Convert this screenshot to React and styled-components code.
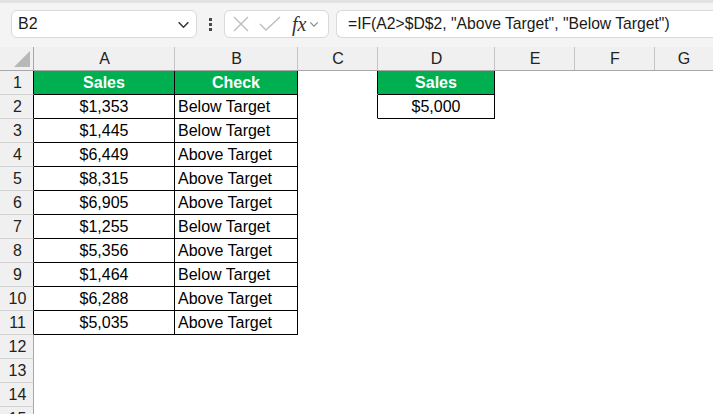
import React from "react"
import styled, { createGlobalStyle } from "styled-components"

const Global = createGlobalStyle`
  html, body { margin: 0; padding: 0; background: #fff; }
  body { width: 713px; height: 414px; overflow: hidden; font-family: "Liberation Sans", Arial, sans-serif; }
`

const rows = [
  ["$1,353", "Below Target"],
  ["$1,445", "Below Target"],
  ["$6,449", "Above Target"],
  ["$8,315", "Above Target"],
  ["$6,905", "Above Target"],
  ["$1,255", "Below Target"],
  ["$5,356", "Above Target"],
  ["$1,464", "Below Target"],
  ["$6,288", "Above Target"],
  ["$5,035", "Above Target"],
]

const cols = ["A", "B", "C", "D", "E", "F", "G"]

const Page = styled.div`
  width: 713px;
  height: 414px;
  overflow: hidden;
  display: flex;
  flex-direction: column;
`

const Toolbar = styled.div`
  flex-shrink: 0;
  height: 47px;
  box-sizing: border-box;
  background: #f4f4f4;
  border-top: 3px solid #e2e2e2;
  padding: 7px 0 0 11px;
  display: flex;
  align-items: flex-start;
`

const NameBox = styled.div`
  width: 186px;
  height: 28px;
  box-sizing: border-box;
  background: #fff;
  border: 1px solid #d9d9d9;
  border-radius: 6px;
  display: flex;
  align-items: center;
  justify-content: space-between;
  padding: 0 6px 0 6px;
  font-size: 16px;
  color: #1a1a1a;
`

const Dots = styled.div`
  width: 27px;
  height: 28px;
  display: flex;
  flex-direction: column;
  align-items: center;
  justify-content: center;
  gap: 2px;
  span {
    width: 3px;
    height: 3px;
    background: #4a4a4a;
  }
`

const FxBox = styled.div`
  width: 105px;
  height: 28px;
  box-sizing: border-box;
  background: #fff;
  border: 1px solid #d9d9d9;
  border-radius: 6px;
  display: flex;
  align-items: center;
  padding: 0 4px 0 7px;
  gap: 9px;
`

const Fx = styled.span`
  font-family: "Liberation Serif", "Times New Roman", serif;
  font-style: italic;
  font-size: 20px;
  color: #333;
  margin-left: 2px;
  margin-right: -6px;
`

const Formula = styled.div`
  flex: 1;
  height: 28px;
  box-sizing: border-box;
  margin-left: 7px;
  background: #fff;
  border: 1px solid #d9d9d9;
  border-right: none;
  border-radius: 6px 0 0 6px;
  display: flex;
  align-items: center;
  padding-left: 11px;
  font-size: 15.7px;
  color: #1a1a1a;
  white-space: nowrap;
`

const Sheet = styled.div`
  flex-shrink: 0;
  display: grid;
  grid-template-columns: 34px 141px 123px 80px 117px 80px 80px 1fr;
  grid-auto-rows: 24px;
  font-size: 16px;
`

const Corner = styled.div`
  background: #f0f0f0;
  box-sizing: border-box;
  border-right: 1px solid #a8a8a8;
  border-bottom: 1px solid #a8a8a8;
  position: relative;
  &::after {
    content: "";
    position: absolute;
    right: 3px;
    bottom: 3px;
    width: 0;
    height: 0;
    border-left: 16px solid transparent;
    border-bottom: 16px solid #b8b8b8;
  }
`

const ColHead = styled.div`
  background: #f0f0f0;
  box-sizing: border-box;
  border-bottom: 1px solid #a8a8a8;
  display: flex;
  align-items: center;
  justify-content: center;
  color: #222;
  position: relative;
  &::after {
    content: "";
    position: absolute;
    right: 0;
    top: 0;
    bottom: 0;
    border-right: 1px solid ${(p) => (p.$last ? "transparent" : "#c4c4c4")};
  }
`

const RowHead = styled.div`
  background: #f0f0f0;
  box-sizing: border-box;
  border-right: 1px solid ${(p) => (p.$edge ? "#000" : "#a8a8a8")};
  border-bottom: 1px solid #d2d2d2;
  display: flex;
  align-items: center;
  justify-content: center;
  color: #222;
  padding-left: 2px;
`

const Cell = styled.div`
  box-sizing: border-box;
  background: ${(p) => (p.$fill ? "#00b050" : "#fff")};
  color: ${(p) => (p.$fill ? "#fff" : "#000")};
  font-weight: ${(p) => (p.$fill ? 700 : 400)};
  border-right: 1px solid ${(p) => (p.$boxed || p.$edge ? "#000" : "transparent")};
  border-bottom: 1px solid ${(p) => (p.$boxed ? "#000" : "transparent")};
  display: flex;
  align-items: center;
  justify-content: ${(p) => (p.$left ? "flex-start" : "center")};
  padding: 0 3px;
  white-space: nowrap;
  overflow: hidden;
`

const Close = () => (
  <svg width="18" height="18" viewBox="0 0 18 18" fill="none" stroke="#bdbdbd" strokeWidth="1.4">
    <path d="M2 2 L16 16 M16 2 L2 16" />
  </svg>
)

const Check = () => (
  <svg width="22" height="18" viewBox="0 0 22 18" fill="none" stroke="#bdbdbd" strokeWidth="1.4">
    <path d="M1 9 L7 15 L21 2" />
  </svg>
)

const Chevron = ({ size = 12, color = "#444" }) => (
  <svg width={size} height={size} viewBox="0 0 12 12" fill="none" stroke={color} strokeWidth="1.4">
    <path d="M1.5 4 L6 8.5 L10.5 4" />
  </svg>
)

const Row = ({ n, a, b, d }) => (
  <>
    <RowHead $edge={n <= 11}>{n}</RowHead>
    {a ? <Cell $boxed $fill={a.fill}>{a.text}</Cell> : <Cell />}
    {b ? <Cell $boxed $fill={b.fill} $left={!b.fill}>{b.text}</Cell> : <Cell />}
    <Cell $edge={!!d} />
    {d ? <Cell $boxed $fill={d.fill}>{d.text}</Cell> : <Cell />}
    <Cell />
    <Cell />
    <Cell />
  </>
)

export default function App() {
  const list = []
  list.push(<Row key={1} n={1} a={{ text: "Sales", fill: true }} b={{ text: "Check", fill: true }} d={{ text: "Sales", fill: true }} />)
  rows.forEach((r, i) => {
    list.push(
      <Row
        key={i + 2}
        n={i + 2}
        a={{ text: r[0] }}
        b={{ text: r[1] }}
        d={i === 0 ? { text: "$5,000" } : null}
      />
    )
  })
  for (let n = 12; n <= 15; n++) list.push(<Row key={n} n={n} />)

  return (
    <Page>
      <Global />
      <Toolbar>
        <NameBox>
          <span>B2</span>
          <Chevron size={13} color="#333" />
        </NameBox>
        <Dots>
          <span />
          <span />
          <span />
        </Dots>
        <FxBox>
          <Close />
          <Check />
          <Fx>fx</Fx>
          <Chevron size={10} color="#888" />
        </FxBox>
        <Formula>=IF(A2&gt;$D$2, "Above Target", "Below Target")</Formula>
      </Toolbar>
      <Sheet>
        <Corner />
        {cols.map((c, i) => (
          <ColHead key={c} $last={i === cols.length - 1}>{c}</ColHead>
        ))}
        {list}
      </Sheet>
    </Page>
  )
}
